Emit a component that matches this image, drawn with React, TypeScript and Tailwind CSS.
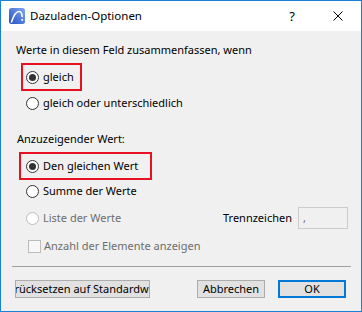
import React from 'react';

function Radio({ checked, disabled }: { checked?: boolean; disabled?: boolean }) {
  return (
    <span
      className={`w-[13px] h-[13px] rounded-full border flex items-center justify-center bg-white shrink-0 ${
        disabled ? 'border-[#bcbcbc]' : 'border-[#333333]'
      }`}
    >
      {checked && <span className="w-[7px] h-[7px] rounded-full bg-[#333333]" />}
    </span>
  );
}

function AppIcon() {
  return (
    <svg width="16" height="16" viewBox="0 0 16 16">
      <defs>
        <linearGradient id="ac" x1="0" y1="1" x2="1" y2="0">
          <stop offset="0" stopColor="#2450c8" />
          <stop offset="1" stopColor="#7fa8ee" />
        </linearGradient>
      </defs>
      <rect x="0" y="0" width="16" height="16" rx="2.5" fill="url(#ac)" />
      <path d="M2.5 14 C4.5 8, 7 3.5, 10 3.5 C12.2 3.5, 13 6, 13.2 8.5" fill="none" stroke="#fff" strokeWidth="1.6" strokeLinecap="round" />
      <rect x="12.4" y="11" width="1.6" height="1.8" fill="#fff" />
    </svg>
  );
}

export default function App() {
  return (
    <div
      className="w-[362px] h-[312px] border border-[#1a80d6] bg-[#f0f0f0] flex flex-col text-[11px] text-black leading-[16px] overflow-hidden"
      style={{ fontFamily: '"Noto Sans", sans-serif' }}
    >
      <div className="h-[30px] bg-white flex items-center shrink-0">
        <span className="ml-[8px]">
          <AppIcon />
        </span>
        <span className="ml-[5px] text-[11.5px]">Dazuladen-Optionen</span>
        <span className="ml-auto mr-[38px] text-[13px]">?</span>
        <svg width="10" height="10" viewBox="0 0 10 10" className="mr-[18px]">
          <path d="M0.5 0.5 L9.5 9.5 M9.5 0.5 L0.5 9.5" stroke="#000" strokeWidth="1" />
        </svg>
      </div>

      <div className="flex flex-col pl-[15px]">
        <div className="mt-[11px] h-[16px]">Werte in diesem Feld zusammenfassen, wenn</div>

        <div className="mt-[5px] ml-[5px] w-[61px] h-[28px] border-2 border-[#e81123] flex items-center pl-[3px] gap-[4px]">
          <Radio checked />
          <span>gleich</span>
        </div>

        <div className="mt-[4px] ml-[10px] h-[16px] flex items-center gap-[4px]">
          <Radio />
          <span>gleich oder unterschiedlich</span>
        </div>

        <div className="mt-[20px] ml-[1px] h-[16px]">Anzuzeigender Wert:</div>

        <div className="mt-[5px] ml-[3px] w-[133px] h-[28px] border-2 border-[#e81123] flex items-center pl-[5px] gap-[4px]">
          <Radio checked />
          <span>Den gleichen Wert</span>
        </div>

        <div className="mt-[3px] ml-[10px] h-[16px] flex items-center gap-[4px]">
          <Radio />
          <span>Summe der Werte</span>
        </div>

        <div className="mt-[8px] h-[22px] flex items-center">
          <div className="ml-[10px] flex items-center gap-[4px] text-[#6d6d6d]">
            <Radio disabled />
            <span>Liste der Werte</span>
          </div>
          <span className="ml-auto">Trennzeichen</span>
          <div className="ml-[6px] mr-[13px] w-[50px] h-[22px] border border-[#cccccc] bg-[#f0f0f0] flex items-center pl-[4px] text-[#6d6d6d]">
            ,
          </div>
        </div>

        <div className="mt-[9px] ml-[12px] h-[16px] flex items-center gap-[3px] text-[#6d6d6d]">
          <span className="w-[13px] h-[13px] border border-[#bcbcbc] bg-[#f7f7f7] shrink-0" />
          <span>Anzahl der Elemente anzeigen</span>
        </div>

        <div className="mt-[12px] ml-[-4px] w-[339px] h-px bg-[#a0a0a0]" />

        <div className="mt-[13px] flex items-center">
          <div className="ml-[-1px] w-[135px] h-[18px] border border-[#adadad] bg-[#e1e1e1] flex items-center justify-center pl-[6px] overflow-hidden whitespace-nowrap">
            <span className="shrink-0">Zurücksetzen auf Standardwerte</span>
          </div>
          <div className="ml-[47px] w-[68px] h-[18px] border border-[#adadad] bg-[#e1e1e1] flex items-center justify-center">
            Abbrechen
          </div>
          <div className="ml-[13px] w-[68px] h-[18px] border-2 border-[#0078d7] bg-[#e1e1e1] flex items-center justify-center">
            OK
          </div>
        </div>
      </div>
    </div>
  );
}
